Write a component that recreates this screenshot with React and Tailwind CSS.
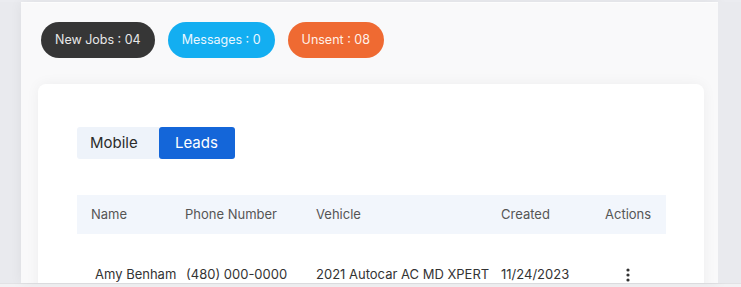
export default function App() {
  const cols = 'grid grid-cols-[94px_131px_185px_104px_75px]';
  return (
    <div className="w-[741px] h-[287px] overflow-hidden bg-[#ebecf0] font-['Inter',sans-serif]">
      <div className="flex h-[283px] pt-[2px]">
        <div className="w-[21px] bg-[#e9eaee]" />
        <div className="flex-1 bg-[#f9f9fa] border-t border-[#fdfdfd] flex flex-col overflow-hidden shadow-[0_0_12px_rgba(0,0,0,0.06)]">
          {/* Counters */}
          <div className="flex gap-[13px] pl-[20px] pt-[19px]">
            <span className="h-[36px] px-[14px] rounded-full bg-[#363636] text-[#e8e8e8] text-[12.5px] flex items-center">New Jobs : 04</span>
            <span className="h-[36px] px-[14px] rounded-full bg-[#13aef1] text-[#eaf7ff] text-[12.5px] flex items-center">Messages : 0</span>
            <span className="h-[36px] px-[14px] rounded-full bg-[#ef6a32] text-[#fff0e8] text-[12.5px] flex items-center">Unsent : 08</span>
          </div>

          {/* Card */}
          <div className="mt-[26px] ml-[17px] mr-[14px] flex-1 bg-white rounded-t-[8px] shadow-[0_0_14px_rgba(0,0,0,0.05)] pl-[39px] pt-[43px]">
            <div className="flex">
              <div className="h-[32px] w-[82px] bg-[#eef3fa] rounded-l-[3px] flex items-center pl-[13px] text-[15px] text-[#2b2b2b]">Mobile</div>
              <div className="h-[32px] w-[76px] bg-[#1466d9] rounded-[3px] flex items-center pl-[16px] text-[15px] text-white">Leads</div>
            </div>

            <div className="mt-[36px] w-[589px]">
              <div className={`${cols} h-[39px] items-center bg-[#f2f6fc] text-[13px] text-[#555]`}>
                <div className="pl-[14px]">Name</div>
                <div className="pl-[14px]">Phone Number</div>
                <div className="pl-[14px]">Vehicle</div>
                <div className="pl-[14px]">Created</div>
                <div className="pl-[14px]">Actions</div>
              </div>
              <div className={`${cols} h-[82px] items-center text-[13px] text-[#333]`}>
                <div className="pl-[18px] whitespace-nowrap">Amy Benham</div>
                <div className="pl-[15px] whitespace-nowrap">(480) 000-0000</div>
                <div className="pl-[14px] whitespace-nowrap">2021 Autocar AC MD XPERT</div>
                <div className="pl-[14px]">11/24/2023</div>
                <div className="pl-[34px] flex">
                  <svg width="6" height="14" viewBox="0 0 6 14" fill="#333">
                    <circle cx="3" cy="2" r="1.6" />
                    <circle cx="3" cy="7" r="1.6" />
                    <circle cx="3" cy="12" r="1.6" />
                  </svg>
                </div>
              </div>
            </div>
          </div>
        </div>
        <div className="w-[23px] bg-[#e9eaee]" />
      </div>
      <div className="h-[4px] bg-[#f2f2f4] border-t border-[#e2e2e5]" />
    </div>
  );
}
